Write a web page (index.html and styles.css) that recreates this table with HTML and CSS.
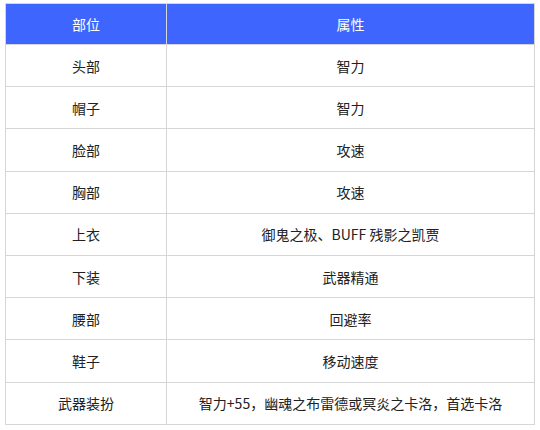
FILE: index.html
```html
<!DOCTYPE html>
<html lang="zh">
<head>
<meta charset="utf-8">
<link rel="stylesheet" href="styles.css">
</head>
<body>
<table class="gear">
  <thead>
    <tr><th class="col-part">部位</th><th>属性</th></tr>
  </thead>
  <tbody>
    <tr><td>头部</td><td>智力</td></tr>
    <tr><td>帽子</td><td>智力</td></tr>
    <tr><td>脸部</td><td>攻速</td></tr>
    <tr><td>胸部</td><td>攻速</td></tr>
    <tr><td>上衣</td><td>御鬼之极、BUFF 残影之凯贾</td></tr>
    <tr><td>下装</td><td>武器精通</td></tr>
    <tr><td>腰部</td><td>回避率</td></tr>
    <tr><td>鞋子</td><td>移动速度</td></tr>
    <tr><td>武器装扮</td><td>智力+55，幽魂之布雷德或冥炎之卡洛，首选卡洛</td></tr>
  </tbody>
</table>
</body>
</html>
```

FILE: styles.css
```css
html, body {
  margin: 0;
  padding: 0;
  background: #ffffff;
}
body {
  padding: 3px 0 0 5px;
  font-family: "Microsoft YaHei", "Noto Sans CJK SC", "Noto Sans", sans-serif;
  font-size: 14px;
  color: #222;
}
.gear {
  border-collapse: collapse;
  width: 530px;
  table-layout: fixed;
}
.gear th, .gear td {
  border: 1px solid #d6d6d6;
  text-align: center;
  vertical-align: middle;
  padding: 0 4px;
  font-weight: normal;
  line-height: 20px;
}
.gear th {
  background: #3e66fe;
  color: #ffffff;
  height: 41px;
  box-sizing: border-box;
}
.gear .col-part {
  width: 161px;
}
.gear td {
  height: 42.2px;
  box-sizing: border-box;
}
```
